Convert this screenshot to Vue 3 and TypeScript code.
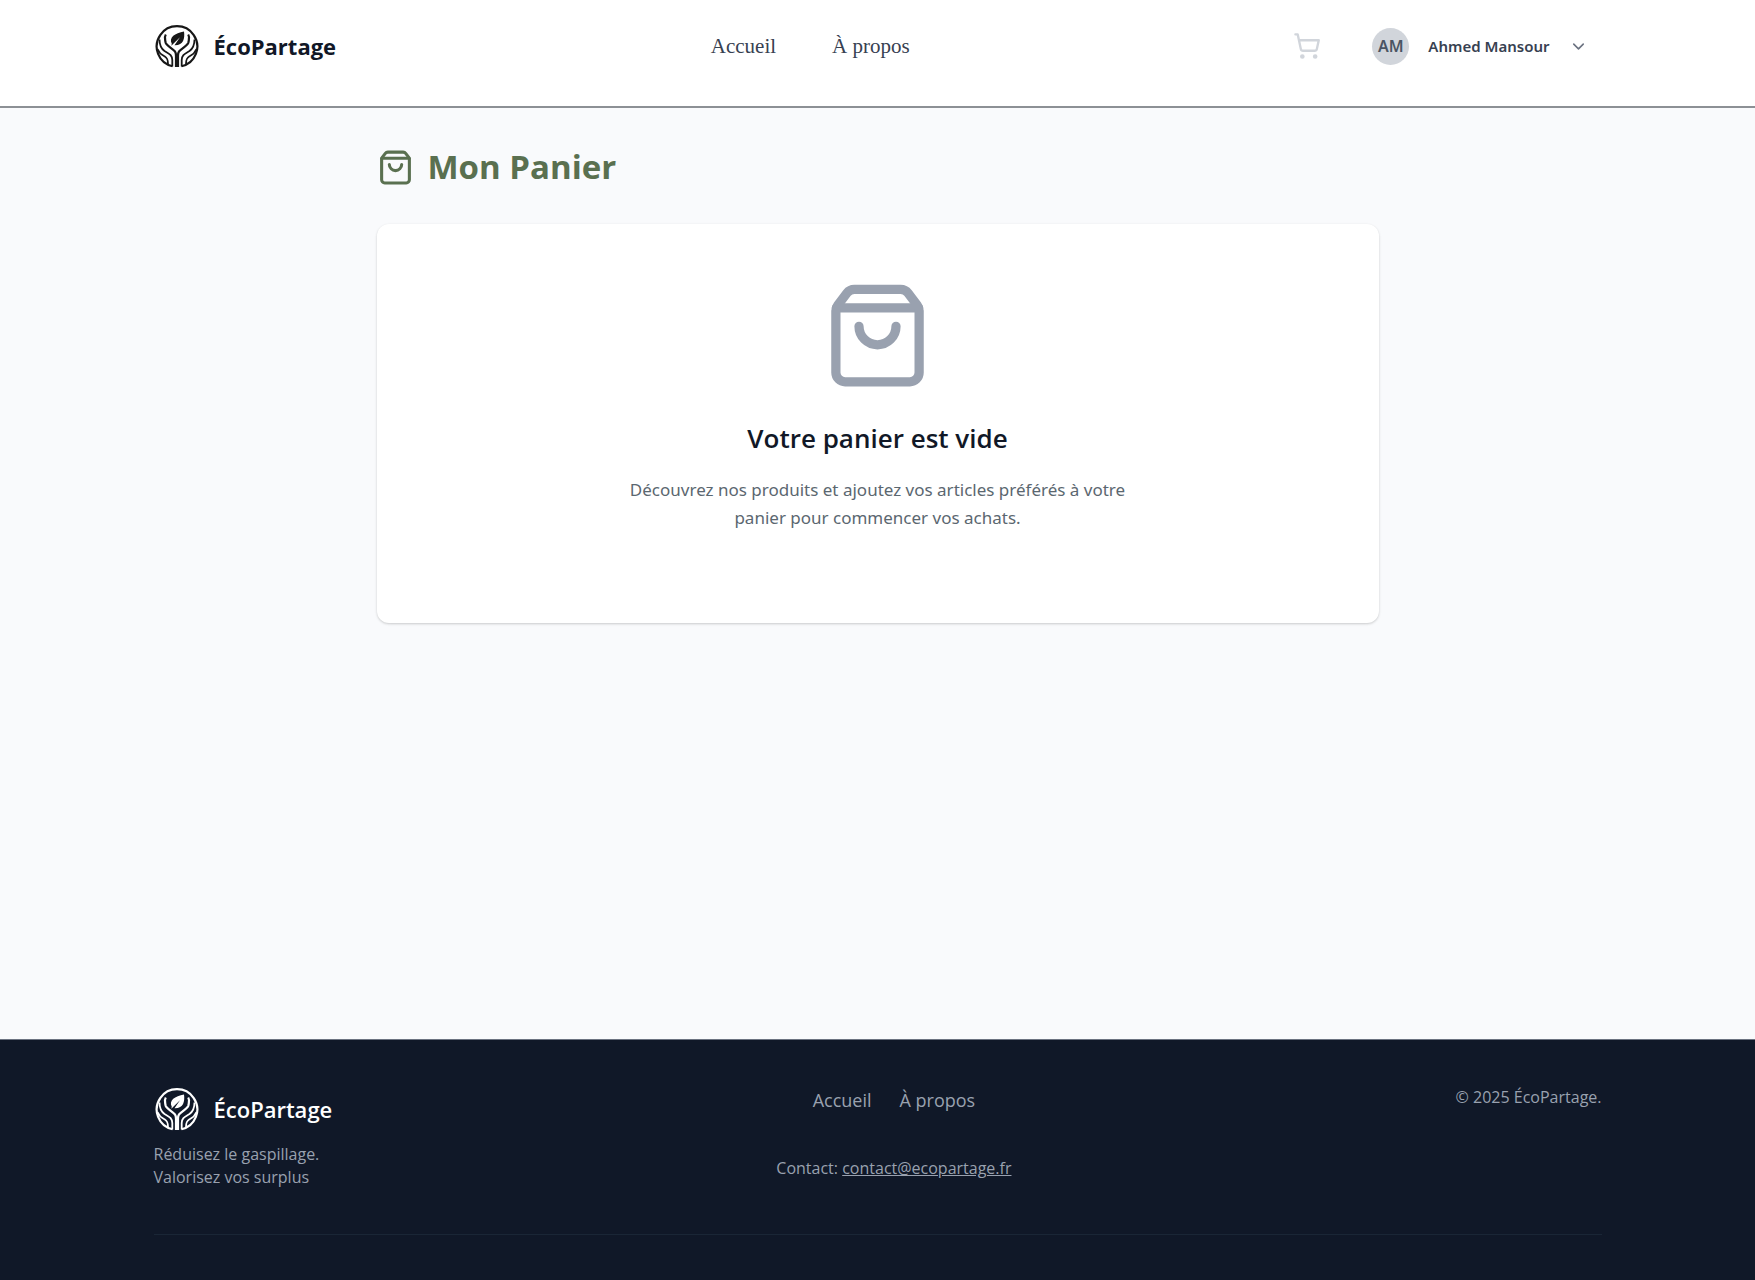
<script setup lang="ts">
import { defineComponent, h } from 'vue'

interface NavItem {
  label: string
  href: string
}

const links: NavItem[] = [
  { label: 'Accueil', href: '#accueil' },
  { label: 'À propos', href: '#a-propos' },
]

const user = { name: 'Ahmed Mansour', initials: 'AM' }
const email = 'contact@ecopartage.fr'

const stroked = {
  viewBox: '0 0 24 24',
  fill: 'none',
  stroke: 'currentColor',
  'stroke-width': 2,
  'stroke-linecap': 'round',
  'stroke-linejoin': 'round',
  'aria-hidden': 'true',
}

const BagIcon = defineComponent(() => () =>
  h('svg', stroked, [
    h('path', { d: 'M16 10a4 4 0 0 1-8 0' }),
    h('path', { d: 'M3.103 6.034h17.794' }),
    h('path', {
      d: 'M3.4 5.467a2 2 0 0 0-.4 1.2V20a2 2 0 0 0 2 2h14a2 2 0 0 0 2-2V6.667a2 2 0 0 0-.4-1.2l-2-2.667A2 2 0 0 0 17 2H7a2 2 0 0 0-1.6.8z',
    }),
  ]),
)

// Two open hands holding a leaf inside a ring
const BrandMark = defineComponent(() => () =>
  h('svg', { ...stroked, viewBox: '0 0 46 46', 'stroke-width': 1.8, 'stroke-linecap': 'butt' }, [
    h('path', { d: 'M18.500 43.300A20.300 20.300 0 1 1 27.500 43.300', 'stroke-width': 2.2 }),
    h('path', { d: 'M11.800 11.500C9.800 14.500 11.300 17 11.600 19.500C12.200 22.500 18 25 21 28.500C21.800 29.500 22 31 22 33V44', 'stroke-width': 2.2 }),
    h('path', { d: 'M34.200 11.500C36.200 14.500 34.700 17 34.400 19.500C33.800 22.500 28 25 25 28.500C24.200 29.500 24 31 24 33V44', 'stroke-width': 2.2 }),
    h('path', { d: 'M5.500 16.500C5.500 22.500 7 25.500 10.500 28C14.500 30.500 18.300 31.500 18.300 37V43.500' }),
    h('path', { d: 'M40.500 16.500C40.500 22.500 39 25.500 35.500 28C31.500 30.500 27.700 31.500 27.700 37V43.500' }),
    h('path', { d: 'M3.500 26C5.500 31 8 32 10.500 33.300C13.300 35 14 36.500 14 41' }),
    h('path', { d: 'M42.500 26C40.500 31 38 32 35.500 33.300C32.700 35 32 36.500 32 41' }),
    h('path', {
      d: 'M30 8.500C31 15.500 29.500 22.500 20.500 22.200L26 14.300L17.300 22.700L17.800 20.700C14.500 14.500 21 10 30 8.500Z',
      fill: 'currentColor',
      stroke: 'none',
    }),
  ]),
)
</script>

<template>
  <div class="page">
    <header class="header">
      <div class="container header-row">
        <a class="brand" href="#accueil">
          <BrandMark class="mark" />
          <span class="brand-name">ÉcoPartage</span>
        </a>
        <nav class="nav" aria-label="Navigation principale">
          <a v-for="l in links" :key="l.href" :href="l.href">{{ l.label }}</a>
        </nav>
        <div class="actions">
          <button class="cart" type="button" aria-label="Panier">
            <svg viewBox="0 0 24 24" fill="none" stroke="currentColor" stroke-width="2" stroke-linecap="round" stroke-linejoin="round" aria-hidden="true">
              <circle cx="8" cy="21" r="1" />
              <circle cx="19" cy="21" r="1" />
              <path d="M2.05 2.05h2l2.66 12.42a2 2 0 0 0 2 1.58h9.78a2 2 0 0 0 1.95-1.57l1.65-7.43H5.12" />
            </svg>
          </button>
          <button class="account" type="button">
            <span class="avatar">{{ user.initials }}</span>
            <span>{{ user.name }}</span>
            <svg viewBox="0 0 24 24" fill="none" stroke="currentColor" stroke-width="2" stroke-linecap="round" stroke-linejoin="round" aria-hidden="true">
              <path d="m6 9 6 6 6-6" />
            </svg>
          </button>
        </div>
      </div>
    </header>

    <main class="main">
      <div class="content">
        <h1 class="title"><BagIcon class="title-icon" />Mon Panier</h1>
        <section class="card">
          <BagIcon class="empty-icon" />
          <h2>Votre panier est vide</h2>
          <p>Découvrez nos produits et ajoutez vos articles préférés à votre panier pour commencer vos achats.</p>
        </section>
      </div>
    </main>

    <footer class="footer">
      <div class="container footer-inner">
        <div>
          <a class="brand" href="#accueil">
            <BrandMark class="mark" />
            <span class="brand-name">ÉcoPartage</span>
          </a>
          <p class="tagline">Réduisez le gaspillage.<br />Valorisez vos surplus</p>
        </div>
        <div class="footer-center">
          <nav class="footer-nav" aria-label="Pied de page">
            <a v-for="l in links" :key="l.href" :href="l.href">{{ l.label }}</a>
          </nav>
          <p>Contact: <a class="mail" :href="'mailto:' + email">{{ email }}</a></p>
        </div>
        <p class="copyright">© 2025 ÉcoPartage.</p>
      </div>
    </footer>
  </div>
</template>

<style>
body {
  margin: 0;
  background: #f9fafb;
}
</style>

<style scoped>
.page {
  min-height: 100vh;
  display: flex;
  flex-direction: column;
  background: #f9fafc;
  font-family: 'Segoe UI', 'Open Sans', 'Noto Sans', sans-serif;
  color: #111827;
}
.page * {
  box-sizing: border-box;
}
h1,
h2,
p {
  margin: 0;
}
a {
  color: inherit;
  text-decoration: none;
}
button {
  border: 0;
  background: none;
  font: inherit;
  color: inherit;
  cursor: pointer;
}
svg {
  display: block;
  flex: none;
}
.container {
  width: calc(100% - 48px);
  max-width: 1448px;
  margin: 0 auto;
}
.header {
  background: #fff;
  border-bottom: 2px solid #8c9095;
}
.header-row {
  display: flex;
  align-items: center;
  justify-content: space-between;
  padding: 23px 0 37px;
}
.brand {
  display: flex;
  align-items: center;
  gap: 14px;
}
.mark {
  width: 46px;
  height: 46px;
  color: #171717;
}
.brand-name {
  font-size: 22px;
  line-height: 32px;
  font-weight: 700;
}
.nav {
  display: flex;
  gap: 56px;
  font-family: 'Liberation Serif', serif;
  font-size: 21px;
  line-height: 32px;
  color: #374151;
}
.actions {
  display: flex;
  align-items: center;
  gap: 28px;
}
.cart {
  padding: 9px;
  color: #d1d5db;
}
.cart svg {
  width: 28px;
  height: 28px;
}
.account {
  display: flex;
  align-items: center;
  gap: 19px;
  padding: 0 14px;
  font-family: 'Segoe UI', 'Noto Sans', sans-serif;
  font-size: 15px;
  line-height: 24px;
  font-weight: 600;
  color: #374151;
}
.account svg {
  width: 19px;
  height: 19px;
  color: #6b7280;
}
.avatar {
  width: 37px;
  height: 37px;
  border-radius: 50%;
  display: grid;
  place-items: center;
  background: #d1d5db;
  color: #4b5563;
  font-size: 16px;
}
.main {
  flex: 1;
  padding: 37px 24px;
}
.content {
  max-width: 1002px;
  margin: 0 auto;
}
.title {
  display: flex;
  align-items: center;
  gap: 14px;
  margin-bottom: 35px;
  font-size: 33px;
  line-height: 44px;
  font-weight: 700;
  color: #5a7050;
}
.title-icon {
  width: 37px;
  height: 37px;
}
.card {
  display: flex;
  flex-direction: column;
  align-items: center;
  padding: 56px 24px 91px;
  border-radius: 12px;
  background: #fff;
  box-shadow: 0 1px 3px rgba(0, 0, 0, 0.12), 0 1px 2px rgba(0, 0, 0, 0.08);
  text-align: center;
}
.empty-icon {
  width: 111px;
  height: 111px;
  color: #99a1af;
}
.card h2 {
  margin: 27px 0 18px;
  font-size: 26px;
  line-height: 40px;
  font-weight: 600;
}
.card p {
  max-width: 520px;
  font-family: 'Segoe UI', 'Noto Sans', sans-serif;
  font-size: 17px;
  line-height: 28px;
  color: #5b6770;
}
.footer {
  border-top: 1px solid #6b7280;
  background: #101828;
  color: #99a1af;
  font-size: 16px;
  line-height: 23px;
  padding-bottom: 45px;
}
.footer-inner {
  display: flex;
  align-items: flex-start;
  justify-content: space-between;
  padding: 46px 0 45px;
  border-bottom: 1px solid #1a2636;
}
.footer .mark,
.footer .brand-name {
  color: #fff;
}
.footer .brand-name {
  font-weight: 600;
}
.tagline {
  margin-top: 11px;
}
.footer-center {
  display: flex;
  flex-direction: column;
  align-items: center;
  gap: 43px;
}
.footer-nav {
  display: flex;
  gap: 28px;
  font-size: 18px;
  line-height: 28px;
}
.mail {
  text-decoration: underline;
}
</style>
